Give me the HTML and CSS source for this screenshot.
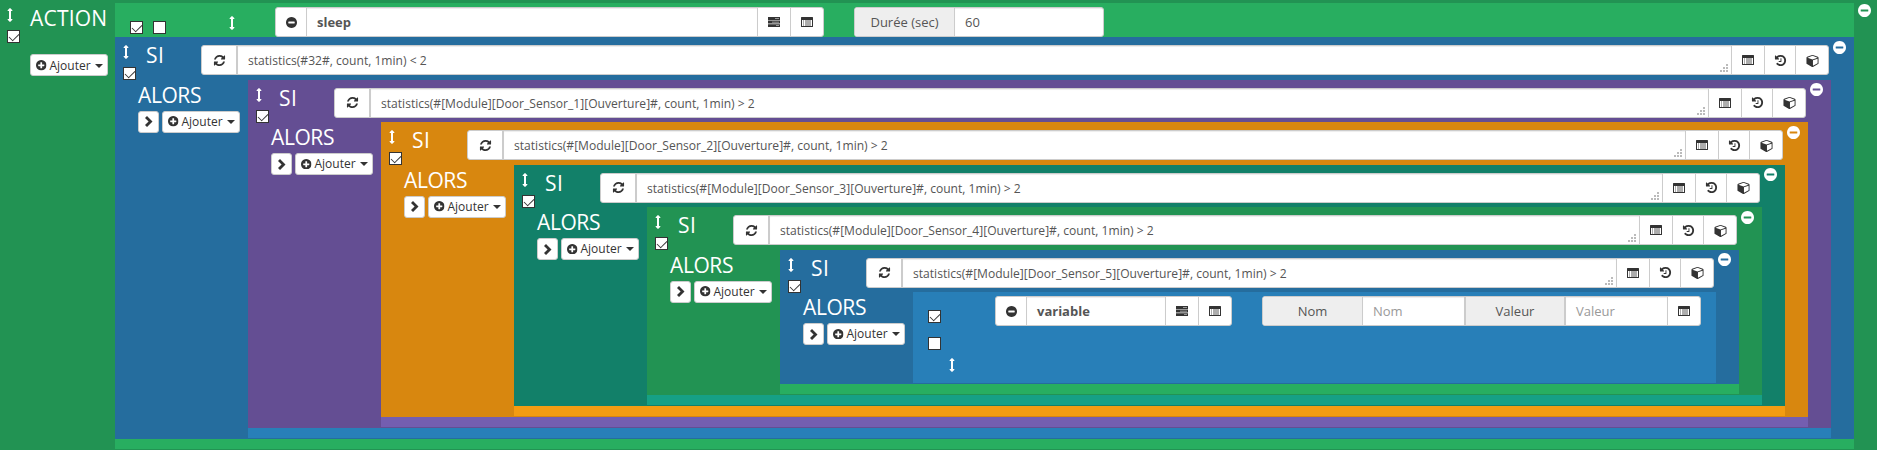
FILE: index.html
```html
<!DOCTYPE html>
<html lang="fr">
<head>
<meta charset="utf-8">
<title>Scénario</title>
<link rel="stylesheet" href="styles.css">
</head>
<body>
<svg class="defs" aria-hidden="true">
  <symbol id="arrows" viewBox="0 0 1792 1792"><path d="M1216 320q0 26-19 45t-45 19h-128v1024h128q26 0 45 19t19 45-19 45l-256 256q-19 19-45 19t-45-19l-256-256q-19-19-19-45t19-45 45-19h128v-1024h-128q-26 0-45-19t-19-45 19-45l256-256q19-19 45-19t45 19l256 256q19 19 19 45z"/></symbol>
  <symbol id="minus" viewBox="128 128 1536 1536"><path d="M1344 960v-128q0-26-19-45t-45-19h-768q-26 0-45 19t-19 45v128q0 26 19 45t45 19h768q26 0 45-19t19-45zm320-64q0 209-103 385.500t-279.500 279.500-385.500 103-385.500-103-279.500-279.500-103-385.500 103-385.500 279.500-279.500 385.500-103 385.500 103 279.500 279.500 103 385.500z"/></symbol>
  <symbol id="plus" viewBox="128 128 1536 1536"><path d="M1344 960v-128q0-26-19-45t-45-19h-256v-256q0-26-19-45t-45-19h-128q-26 0-45 19t-19 45v256h-256q-26 0-45 19t-19 45v128q0 26 19 45t45 19h256v256q0 26 19 45t45 19h128q26 0 45-19t19-45v-256h256q26 0 45-19t19-45zm320-64q0 209-103 385.500t-279.500 279.500-385.500 103-385.500-103-279.500-279.500-103-385.500 103-385.500 279.500-279.500 385.500-103 385.500 103 279.500 279.500 103 385.500z"/></symbol>
  <symbol id="history" viewBox="0 0 1792 1792"><path d="M1664 896q0 156-61 298t-164 245-245 164-298 61q-172 0-327-72.500t-264-204.500q-7-10-6.500-22.500t8.500-20.500l137-138q10-9 25-9 16 2 23 12 73 95 179 147t225 52q104 0 198.500-40.500t163.500-109.500 109.500-163.500 40.500-198.500-40.500-198.500-109.500-163.500-163.500-109.500-198.500-40.500q-98 0-188 35.500t-160 101.500l137 138q31 30 14 69-17 40-59 40h-448q-26 0-45-19t-19-45v-448q0-42 40-59 39-17 69 14l130 129q107-101 244.500-156.500t284.500-55.500q156 0 298 61t245 164 164 245 61 298zm-640-288v448q0 14-9 23t-23 9h-320q-14 0-23-9t-9-23v-64q0-14 9-23t23-9h224v-352q0-14 9-23t23-9h64q14 0 23 9t9 23z"/></symbol>
  <symbol id="cube" viewBox="-64 0 1792 1792"><path d="M896 1629l640-349v-636l-640 233v752zm-64-865l698-254-698-254-698 254zm832-252v768q0 35-18 65t-49 47l-704 384q-28 16-61 16t-61-16l-704-384q-31-17-49-47t-18-65v-768q0-40 23-73t61-47l704-256q22-8 44-8t44 8l704 256q38 14 61 47t23 73z"/></symbol>
  <symbol id="refresh" viewBox="0 0 1792 1792"><path d="M1639 1056q0 5-1 7-64 268-268 434.500t-478 166.500q-146 0-282.500-55t-243.500-157l-129 129q-19 19-45 19t-45-19-19-45v-448q0-26 19-45t45-19h448q26 0 45 19t19 45-19 45l-137 137q71 66 161 102t187 36q134 0 250-65t186-179q11-17 53-117 8-23 30-23h192q13 0 22.500 9.500t9.500 22.500zm25-800v448q0 26-19 45t-45 19h-448q-26 0-45-19t-19-45 19-45l138-138q-148-137-349-137-134 0-250 65t-186 179q-11 17-53 117-8 23-30 23h-199q-13 0-22.500-9.500t-9.500-22.500v-7q65-268 270-434.500t480-166.500q146 0 284 55.500t245 156.500l130-129q19-19 45-19t45 19 19 45z"/></symbol>
  <symbol id="list" viewBox="0 0 12 10"><path fill-rule="evenodd" d="M.6 0h10.800q.6 0 .6.600v8.800q0 .6-.6.600h-10.800q-.6 0-.6-.6v-8.800q0-.6.6-.6zM1 3v6h10v-6z"/><path opacity=".8" d="M2 3.500h1v1h-1zM4 3.500h6v1h-6zM2 5.500h1v1h-1zM4 5.500h6v1h-6zM2 7.500h1v1h-1zM4 7.500h6v1h-6z"/></symbol>
  <symbol id="tasks" viewBox="0 0 12 10"><path d="M0 0h12v3h-12zM0 3.600h12v3h-12zM0 7.200h12v2.800h-12z"/><path class="lit" d="M7 1.200h4v.8h-4zM4 4.700h7v.9h-7zM8 8.200h3v.9h-3z"/></symbol>
  <symbol id="chevron" viewBox="0 0 8 11"><path d="M2 0L7.500 5.500L2 11L0 9L3.600 5.500L0 2z"/></symbol>
</svg>

<main class="block root green">
  <div class="side">
    <div class="handle"><svg class="sort"><use href="#arrows"/></svg><i class="check on"></i></div>
    <div class="title">ACTION</div>
    <button class="small"><svg class="i-plus"><use href="#plus"/></svg><span>Ajouter</span><i class="caret"></i></button>
  </div>
  <div class="body">
    <div class="action">
      <i class="check on"></i><i class="check"></i>
      <svg class="sort"><use href="#arrows"/></svg>
      <div class="group name"><span class="cell"><svg class="i-minus"><use href="#minus"/></svg></span><b class="field">sleep</b><span class="cell"><svg class="i-list"><use href="#tasks"/></svg></span><span class="cell"><svg class="i-list"><use href="#list"/></svg></span></div>
      <div class="group duration"><span class="addon">Durée (sec)</span><span class="field">60</span></div>
    </div>

    <section class="block blue">
      <header class="head"><div class="handle"><svg class="sort"><use href="#arrows"/></svg><i class="check on"></i></div><div class="title">SI</div><div class="group cond"><span class="cell wide"><svg class="i-fa"><use href="#refresh"/></svg></span><span class="field expr">statistics(#32#, count, 1min) &lt; 2<i class="grip"></i></span><span class="cell"><svg class="i-list"><use href="#list"/></svg></span><span class="cell"><svg class="i-fa"><use href="#history"/></svg></span><span class="cell"><svg class="i-fa"><use href="#cube"/></svg></span></div><svg class="remove"><use href="#minus"/></svg></header>
      <div class="then"><div class="title">ALORS</div><button class="small fold"><svg class="i-chevron"><use href="#chevron"/></svg></button><button class="small"><svg class="i-plus"><use href="#plus"/></svg><span>Ajouter</span><i class="caret"></i></button></div>
      <div class="body">
        <section class="block purple">
          <header class="head"><div class="handle"><svg class="sort"><use href="#arrows"/></svg><i class="check on"></i></div><div class="title">SI</div><div class="group cond"><span class="cell wide"><svg class="i-fa"><use href="#refresh"/></svg></span><span class="field expr">statistics(#[Module][Door_Sensor_1][Ouverture]#, count, 1min) &gt; 2<i class="grip"></i></span><span class="cell"><svg class="i-list"><use href="#list"/></svg></span><span class="cell"><svg class="i-fa"><use href="#history"/></svg></span><span class="cell"><svg class="i-fa"><use href="#cube"/></svg></span></div><svg class="remove"><use href="#minus"/></svg></header>
          <div class="then"><div class="title">ALORS</div><button class="small fold"><svg class="i-chevron"><use href="#chevron"/></svg></button><button class="small"><svg class="i-plus"><use href="#plus"/></svg><span>Ajouter</span><i class="caret"></i></button></div>
          <div class="body">
            <section class="block orange">
              <header class="head"><div class="handle"><svg class="sort"><use href="#arrows"/></svg><i class="check on"></i></div><div class="title">SI</div><div class="group cond"><span class="cell wide"><svg class="i-fa"><use href="#refresh"/></svg></span><span class="field expr">statistics(#[Module][Door_Sensor_2][Ouverture]#, count, 1min) &gt; 2<i class="grip"></i></span><span class="cell"><svg class="i-list"><use href="#list"/></svg></span><span class="cell"><svg class="i-fa"><use href="#history"/></svg></span><span class="cell"><svg class="i-fa"><use href="#cube"/></svg></span></div><svg class="remove"><use href="#minus"/></svg></header>
              <div class="then"><div class="title">ALORS</div><button class="small fold"><svg class="i-chevron"><use href="#chevron"/></svg></button><button class="small"><svg class="i-plus"><use href="#plus"/></svg><span>Ajouter</span><i class="caret"></i></button></div>
              <div class="body">
                <section class="block teal">
                  <header class="head"><div class="handle"><svg class="sort"><use href="#arrows"/></svg><i class="check on"></i></div><div class="title">SI</div><div class="group cond"><span class="cell wide"><svg class="i-fa"><use href="#refresh"/></svg></span><span class="field expr">statistics(#[Module][Door_Sensor_3][Ouverture]#, count, 1min) &gt; 2<i class="grip"></i></span><span class="cell"><svg class="i-list"><use href="#list"/></svg></span><span class="cell"><svg class="i-fa"><use href="#history"/></svg></span><span class="cell"><svg class="i-fa"><use href="#cube"/></svg></span></div><svg class="remove"><use href="#minus"/></svg></header>
                  <div class="then"><div class="title">ALORS</div><button class="small fold"><svg class="i-chevron"><use href="#chevron"/></svg></button><button class="small"><svg class="i-plus"><use href="#plus"/></svg><span>Ajouter</span><i class="caret"></i></button></div>
                  <div class="body">
                    <section class="block green">
                      <header class="head"><div class="handle"><svg class="sort"><use href="#arrows"/></svg><i class="check on"></i></div><div class="title">SI</div><div class="group cond"><span class="cell wide"><svg class="i-fa"><use href="#refresh"/></svg></span><span class="field expr">statistics(#[Module][Door_Sensor_4][Ouverture]#, count, 1min) &gt; 2<i class="grip"></i></span><span class="cell"><svg class="i-list"><use href="#list"/></svg></span><span class="cell"><svg class="i-fa"><use href="#history"/></svg></span><span class="cell"><svg class="i-fa"><use href="#cube"/></svg></span></div><svg class="remove"><use href="#minus"/></svg></header>
                      <div class="then"><div class="title">ALORS</div><button class="small fold"><svg class="i-chevron"><use href="#chevron"/></svg></button><button class="small"><svg class="i-plus"><use href="#plus"/></svg><span>Ajouter</span><i class="caret"></i></button></div>
                      <div class="body">
                        <section class="block blue">
                          <header class="head"><div class="handle"><svg class="sort"><use href="#arrows"/></svg><i class="check on"></i></div><div class="title">SI</div><div class="group cond"><span class="cell wide"><svg class="i-fa"><use href="#refresh"/></svg></span><span class="field expr">statistics(#[Module][Door_Sensor_5][Ouverture]#, count, 1min) &gt; 2<i class="grip"></i></span><span class="cell"><svg class="i-list"><use href="#list"/></svg></span><span class="cell"><svg class="i-fa"><use href="#history"/></svg></span><span class="cell"><svg class="i-fa"><use href="#cube"/></svg></span></div><svg class="remove"><use href="#minus"/></svg></header>
                          <div class="then"><div class="title">ALORS</div><button class="small fold"><svg class="i-chevron"><use href="#chevron"/></svg></button><button class="small"><svg class="i-plus"><use href="#plus"/></svg><span>Ajouter</span><i class="caret"></i></button></div>
                          <div class="body leaf">
                            <div class="options"><i class="check on"></i><i class="check"></i><svg class="sort"><use href="#arrows"/></svg></div>
                            <div class="group var"><span class="cell"><svg class="i-minus"><use href="#minus"/></svg></span><b class="field">variable</b><span class="cell"><svg class="i-list"><use href="#tasks"/></svg></span><span class="cell"><svg class="i-list"><use href="#list"/></svg></span></div>
                            <div class="group params"><span class="addon">Nom</span><span class="field hint">Nom</span><span class="addon second">Valeur</span><span class="field hint">Valeur</span><span class="cell"><svg class="i-list"><use href="#list"/></svg></span></div>
                          </div>
                        </section>
                      </div>
                    </section>
                  </div>
                </section>
              </div>
            </section>
          </div>
        </section>
      </div>
    </section>
  </div>
  <svg class="remove"><use href="#minus"/></svg>
</main>
</body>
</html>
```

FILE: styles.css
```css
* { box-sizing: border-box; }
body {
  margin: 0;
  font: 13px/18px "Open Sans", "Noto Sans", sans-serif;
  color: #555;
}
svg { display: block; flex: none; fill: currentColor; }
.defs { position: absolute; width: 0; height: 0; }

/* Nested blocks: label column, body, remove-button gutter */
.block {
  display: grid;
  grid-template-columns: 133px 1fr 23px;
  grid-template-rows: 42.5px auto;
  padding-bottom: 1px;
  background: var(--dark);
}
.root {
  grid-template-columns: 115px 1fr 23px;
  grid-template-rows: auto;
  height: 450px;
}
.green { --dark: #229353; --light: #28ae60; }
.blue { --dark: #256d9e; --light: #287fb8; }
.purple { --dark: #644e93; --light: #745eb0; }
.orange { --dark: #d8870f; --light: #f39c12; }
.teal { --dark: #128069; --light: #16a085; }

.body { grid-column: 2; background: var(--light); padding-bottom: 10px; }
.root > .body { margin-top: 3px; }

.head { grid-column: 1 / 4; display: flex; align-items: flex-start; padding-right: 8px; }
.handle { width: 28px; flex: none; padding: 8px 0 0 8px; color: #fff; }
.handle .check { margin-top: 8px; }
.root > .side .handle { padding-left: 7px; }
.sort { width: 14px; height: 14px; color: #fff; }
.handle .sort { margin-left: -4px; }
.title { color: #fff; font-size: 21px; line-height: 22px; letter-spacing: -.4px; }
.head .title { width: 58px; flex: none; padding: 7px 0 0 3px; letter-spacing: .5px; }
.remove { width: 13px; height: 13px; margin: 3.500px 0 0 4px; color: #fff; }

.side {
  display: grid;
  grid-template-columns: 30px 1fr;
  grid-template-rows: 54px 22px;
  align-items: start;
}
.side .title { padding-top: 7px; letter-spacing: .2px; }
.side .small { grid-column: 2; justify-self: start; padding-top: 1px; }

.then {
  grid-column: 1;
  display: grid;
  grid-template-columns: 21px 78px;
  grid-template-rows: 23px 22px;
  column-gap: 3px;
  row-gap: 8px;
  padding-left: 23px;
  align-items: start;
  align-content: start;
}
.then .title { grid-column: 1 / 3; padding-top: 4px; }

.small {
  display: flex;
  align-items: center;
  width: 78px;
  height: 22px;
  padding: 0 0 0 5px;
  border: 1px solid #ccc;
  border-radius: 3px;
  background: #fff;
  color: #333;
  font: 12px/18px "Open Sans", "Noto Sans", sans-serif;
}
.small span { margin-left: 3px; }
.fold { width: 21px; padding: 0 0 0 6px; }
.i-plus { width: 10.500px; height: 10.500px; }
.i-chevron { width: 8px; height: 11px; }
.caret {
  margin-left: 4px;
  border: 4px solid transparent;
  border-top-color: currentColor;
  border-bottom: 0;
}

.check {
  display: block;
  flex: none;
  width: 13px;
  height: 13px;
  border: 1px solid #333;
  background: #fff;
}
.check.on::after {
  content: "";
  display: block;
  width: 9px;
  height: 5px;
  margin: 2px 0 0 1px;
  border: solid #333;
  border-width: 0 0 1.500px 1.500px;
  transform: rotate(-45deg) scale(.95);
}

/* Input groups */
.group {
  display: flex;
  height: 30px;
  border: 1px solid #ccc;
  border-radius: 3px;
  background: #fff;
  overflow: hidden;
}
.group > * + * { border-left: 1px solid #ccc; }
.cell {
  display: flex;
  flex: none;
  align-items: center;
  justify-content: center;
  width: 33px;
  color: #333;
}
.field {
  display: block;
  flex: 1;
  min-width: 0;
  padding: 5px 10px;
  box-shadow: inset 0 1px 1px rgba(0, 0, 0, .075);
  white-space: nowrap;
}
.addon {
  flex: none;
  width: 99px;
  padding-top: 5px;
  background: #eee;
  text-align: center;
}
.hint { color: #999; }
.i-fa { width: 13px; height: 13px; }
.i-list { width: 12px; height: 10px; }
.i-minus { width: 11px; height: 11px; }
.lit { fill: #bbb; }

.cond { flex: 1; margin-top: 8px; }
.cond .wide { width: 34px; }
.cond .expr { border-left-width: 2px; position: relative; padding-top: 6px; font-size: 12.080px; }
.cond .cell:nth-child(4) { width: 31px; }
.grip {
  position: absolute;
  right: 3px;
  bottom: 2px;
  width: 8px;
  height: 8px;
  background: conic-gradient(#bbb 0 0) 6px 0 / 2px 2px no-repeat,
    conic-gradient(#bbb 0 0) 3px 3px / 2px 2px no-repeat,
    conic-gradient(#bbb 0 0) 6px 3px / 2px 2px no-repeat,
    conic-gradient(#bbb 0 0) 0 6px / 2px 2px no-repeat,
    conic-gradient(#bbb 0 0) 3px 6px / 2px 2px no-repeat,
    conic-gradient(#bbb 0 0) 6px 6px / 2px 2px no-repeat;
}

.action { display: flex; height: 34px; padding: 4px 0 0 15px; }
.action .check { margin: 14px 10px 0 0; }
.action .sort { margin: 9px 0 0 49px; }
.name { width: 549px; margin-left: 36px; }
.name .cell:first-child { width: 30px; }
.duration { width: 250px; margin-left: 30px; }

.leaf { display: flex; height: 91px; padding: 4px 0 0 15px; }
.options { width: 67px; padding-top: 14px; flex: none; }
.options .check + .check { margin-top: 14px; }
.options .sort { margin: 8px 0 0 17px; }
.var { width: 237px; flex: none; }
.var .cell:first-child { width: 30px; }
.params { width: 439px; flex: none; margin-left: 30px; }
.params .addon.second { border-left-width: 2px; width: 100px; }
.params .second + .field { border-left-width: 2px; }
```
